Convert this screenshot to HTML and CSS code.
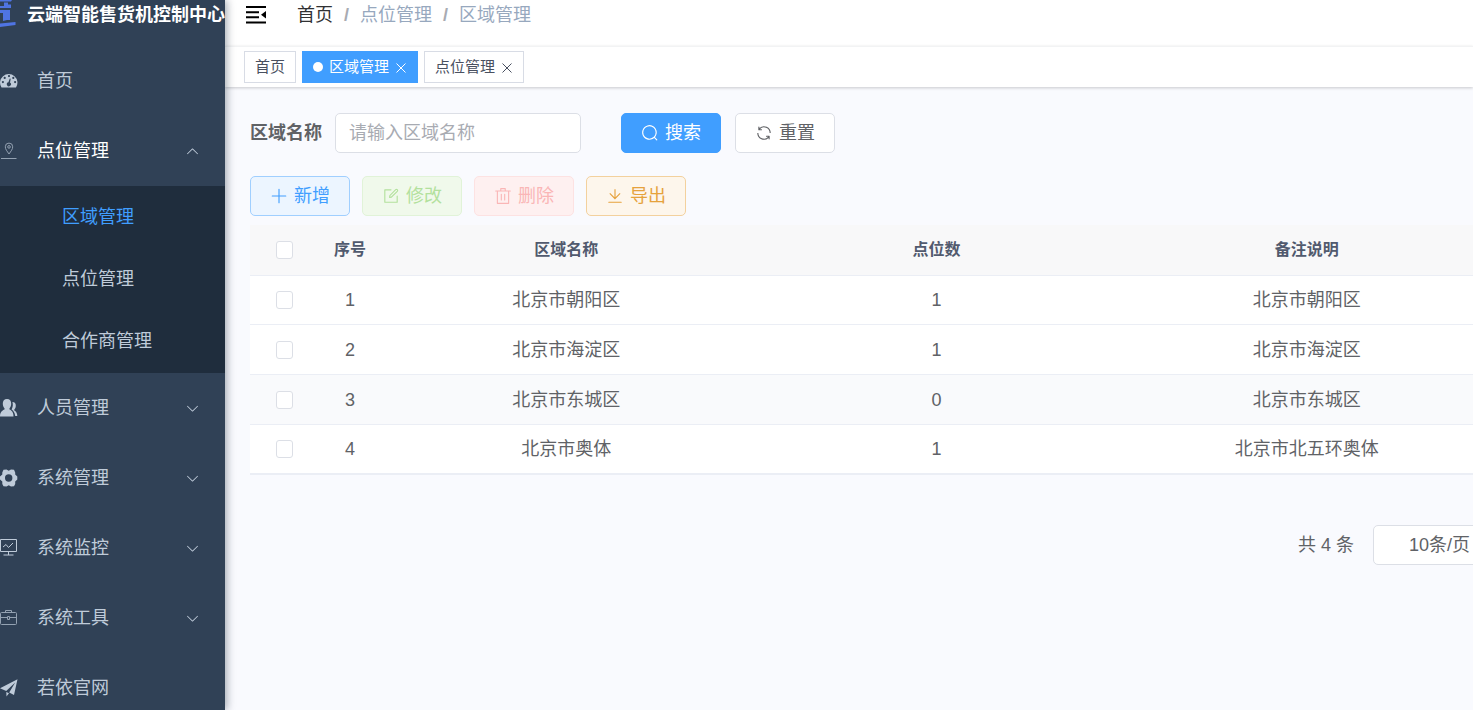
FILE: index.html
```html
<!DOCTYPE html>
<html lang="zh-CN">
<head>
<meta charset="utf-8">
<title>云端智能售货机控制中心</title>
<link rel="stylesheet" href="styles.css">
</head>
<body>
<svg class="sprite" aria-hidden="true">
  <symbol id="arrow" viewBox="0 0 1024 1024"><path d="M831.872 340.864 512 652.672 192.128 340.864a30.592 30.592 0 0 0-42.752 0 29.12 29.12 0 0 0 0 41.6L489.664 714.24a32 32 0 0 0 44.672 0l340.288-331.712a29.12 29.12 0 0 0 0-41.728 30.592 30.592 0 0 0-42.752 0z"/></symbol>
  <symbol id="close" viewBox="0 0 12 12"><path d="M1.500 1.500 10.500 10.500M10.500 1.500 1.500 10.500" fill="none" stroke="currentColor"/></symbol>
</svg>
<div class="app">
  <aside class="sidebar">
    <div class="brand">
      <svg class="brand-logo" viewBox="0 0 18 28"><path d="M0 0H12L11 1.500H0zM4 2.500H8V4.500H11V8H0V6H4zM0 10H10V20H7L3 21V13H0zM0 23.500 15.500 22V25L0 27z" fill="#4f74e3"/></svg>
      <h1 class="brand-title">云端智能售货机控制中心</h1>
    </div>
    <nav class="menu">
      <a class="menu-item" href="#">
        <svg class="menu-icon" viewBox="0 0 18 18"><path fill-rule="evenodd" d="M1.500 15.500A8.700 8.700 0 1 1 16 15.500zM9 3a1.100 1.100 0 1 0 0 2.200 1.100 1.100 0 0 0 0-2.200M4.700 4.800a1.100 1.100 0 1 0 0 2.200 1.100 1.100 0 0 0 0-2.200M13.300 4.800a1.100 1.100 0 1 0 0 2.200 1.100 1.100 0 0 0 0-2.200M2.900 9a1.100 1.100 0 1 0 0 2.200 1.100 1.100 0 0 0 0-2.200M15.100 9a1.100 1.100 0 1 0 0 2.200 1.100 1.100 0 0 0 0-2.200M9.800 6.500 8.400 10.300A2 2 0 1 0 10 10.600L10.700 6.800z"/></svg>
        <span>首页</span>
      </a>
      <a class="menu-item opened" href="#">
        <svg class="menu-icon line dim" viewBox="0 0 18 18"><path d="M9 12C7 9 5.300 7.300 5.300 4.800a3.700 3.700 0 0 1 7.400 0C12.700 7.300 11 9 9 12z"/><circle cx="9" cy="4.900" r="1.300"/><path d="M1 16.500H16.500"/></svg>
        <span>点位管理</span>
        <svg class="menu-arrow up"><use href="#arrow"/></svg>
      </a>
      <div class="submenu">
        <a class="submenu-item active" href="#">区域管理</a>
        <a class="submenu-item" href="#">点位管理</a>
        <a class="submenu-item" href="#">合作商管理</a>
      </div>
      <a class="menu-item" href="#">
        <svg class="menu-icon" viewBox="0 0 18 18"><path d="M7 0C9.700 0 11.400 1.900 11.200 5 11.100 7 10.400 8.300 9.500 9.300V10.600C11.500 11.500 13.500 13 13.500 17.500H0C0 13 2.500 11.500 4.500 10.600V9.300C3.600 8.300 2.900 7 2.800 5 2.600 1.900 4.300 0 7 0zM12.400 3C14.800 3 15.900 4.700 15.800 6.700 15.700 8.500 15.200 9.700 14.300 10.500V11.500C16 12.500 17.300 14 17.300 17H15.200C14.900 13.500 13.300 11.500 11.600 10.400 12.900 8 13.200 5.500 12.400 3z"/></svg>
        <span>人员管理</span>
        <svg class="menu-arrow"><use href="#arrow"/></svg>
      </a>
      <a class="menu-item" href="#">
        <svg class="menu-icon" viewBox="0 0 18 18"><path fill-rule="evenodd" d="M3.500.800 6.500.500 8.700 1.700 11 .500 14 .800 15.200 3.500 15.200 5.500 17.300 7.500V10.500L15.200 12.500V15L14 17.300 11 17.500 8.700 16.300 6.500 17.500 3.500 17.300 2.300 15V12.500L0 10.500V7.500L2.300 5.500V3.500zM8.700 5.300a3.700 3.700 0 1 0 0 7.400 3.700 3.700 0 0 0 0-7.400"/></svg>
        <span>系统管理</span>
        <svg class="menu-arrow"><use href="#arrow"/></svg>
      </a>
      <a class="menu-item" href="#">
        <svg class="menu-icon line" viewBox="0 0 18 18"><path d="M.500.500H16.500V12.500H.500zM8.500 12.500V16M3.500 16H13.500M3 8 6 5.500 8.500 8.500 13 4"/></svg>
        <span>系统监控</span>
        <svg class="menu-arrow"><use href="#arrow"/></svg>
      </a>
      <a class="menu-item" href="#">
        <svg class="menu-icon line dim" viewBox="0 0 18 18"><path d="M1.500 3.500H15.500Q16.500 3.500 16.500 4.500V14.500Q16.500 15.500 15.500 15.500H1.500Q.500 15.500.500 14.500V4.500Q.500 3.500 1.500 3.500zM5.500 3.500V1.500H11.500V3.500M.500 8.500H7M10 8.500H16.500M7.500 7.500H9.500V10.500H7.500z"/></svg>
        <span>系统工具</span>
        <svg class="menu-arrow"><use href="#arrow"/></svg>
      </a>
      <a class="menu-item" href="#">
        <svg class="menu-icon" viewBox="0 0 18 18"><path d="M17.500.300 14 16 9.200 13.500 15.200 3.500 6.200 12 0 9.300zM6.300 13 9 14.300 6.500 17.500z"/></svg>
        <span>若依官网</span>
      </a>
    </nav>
  </aside>
  <main class="main">
    <header class="navbar">
      <button class="fold" aria-label="收起菜单">
        <svg viewBox="0 0 20 18"><path d="M0 0H20V2H0zM0 5.300H13V7.300H0zM0 10.300H13V12.300H0zM0 15.600H20V17.600H0zM20 5V12.500L15 8.800z"/></svg>
      </button>
      <nav class="breadcrumb">
        <a class="crumb-link" href="#">首页</a><span class="slash">/</span><span>点位管理</span><span class="slash">/</span><span>区域管理</span>
      </nav>
    </header>
    <nav class="tags">
      <a class="tag" href="#">首页</a>
      <a class="tag current" href="#"><i class="dot"></i>区域管理<svg class="tag-close"><use href="#close"/></svg></a>
      <a class="tag" href="#">点位管理<svg class="tag-close"><use href="#close"/></svg></a>
    </nav>
    <section class="content">
      <form class="search">
        <label class="search-label" for="region">区域名称</label>
        <input class="search-input" id="region" type="text" placeholder="请输入区域名称">
        <button class="btn primary" type="button"><svg viewBox="0 0 1024 1024"><path d="m795.904 750.720 124.992 124.928a32 32 0 0 1-45.248 45.248L750.656 795.904a416 416 0 1 1 45.248-45.248zM480 832a352 352 0 1 0 0-704 352 352 0 0 0 0 704z"/></svg>搜索</button>
        <button class="btn" type="button"><svg viewBox="0 0 1024 1024"><path d="M771.776 794.880A384 384 0 0 1 128 512h64a320 320 0 0 0 555.712 216.448H654.720a32 32 0 1 1 0-64h149.056a32 32 0 0 1 32 32v148.928a32 32 0 1 1-64 0v-50.560zM276.288 295.616h92.992a32 32 0 0 1 0 64H220.160a32 32 0 0 1-32-32V178.560a32 32 0 0 1 64 0v50.560A384 384 0 0 1 896.128 512h-64a320 320 0 0 0-555.776-216.384z"/></svg>重置</button>
      </form>
      <div class="toolbar">
        <button class="btn add" type="button"><svg viewBox="0 0 1024 1024"><path d="M480 480V128a32 32 0 0 1 64 0v352h352a32 32 0 1 1 0 64H544v352a32 32 0 1 1-64 0V544H128a32 32 0 0 1 0-64z"/></svg>新增</button>
        <button class="btn edit" type="button" disabled><svg viewBox="0 0 1024 1024"><path d="M832 512a32 32 0 1 1 64 0v352a32 32 0 0 1-32 32H160a32 32 0 0 1-32-32V160a32 32 0 0 1 32-32h352a32 32 0 0 1 0 64H192v640h640z"/><path d="m469.952 554.240 52.800-7.552L847.104 222.400a32 32 0 1 0-45.248-45.248L477.440 501.440l-7.552 52.800zm422.400-422.400a96 96 0 0 1 0 135.808l-331.840 331.840a32 32 0 0 1-18.112 9.088L436.800 623.680a32 32 0 0 1-36.224-36.224l15.104-105.600a32 32 0 0 1 9.024-18.112l331.904-331.840a96 96 0 0 1 135.744 0z"/></svg>修改</button>
        <button class="btn remove" type="button" disabled><svg viewBox="0 0 1024 1024"><path d="M160 256H96a32 32 0 0 1 0-64h256V95.936a32 32 0 0 1 32-32h256a32 32 0 0 1 32 32V192h256a32 32 0 1 1 0 64h-64v672a32 32 0 0 1-32 32H192a32 32 0 0 1-32-32zm448-64v-64H416v64zM224 896h576V256H224zm192-128a32 32 0 0 1-32-32V416a32 32 0 0 1 64 0v320a32 32 0 0 1-32 32m192 0a32 32 0 0 1-32-32V416a32 32 0 0 1 64 0v320a32 32 0 0 1-32 32"/></svg>删除</button>
        <button class="btn export" type="button"><svg viewBox="0 0 1024 1024"><path d="M160 832h704a32 32 0 1 1 0 64H160a32 32 0 1 1 0-64m384-253.696 236.288-236.352 45.248 45.248L508.800 704 192 387.200l45.248-45.248L480 584.704V128h64z"/></svg>导出</button>
      </div>
      <div class="table-wrap">
        <table class="table">
          <thead>
            <tr><th class="col-check"><input type="checkbox" aria-label="全选"></th><th class="col-index">序号</th><th>区域名称</th><th>点位数</th><th>备注说明</th></tr>
          </thead>
          <tbody>
            <tr><td><input type="checkbox" aria-label="选择 1"></td><td>1</td><td>北京市朝阳区</td><td>1</td><td>北京市朝阳区</td></tr>
            <tr><td><input type="checkbox" aria-label="选择 2"></td><td>2</td><td>北京市海淀区</td><td>1</td><td>北京市海淀区</td></tr>
            <tr class="hovered"><td><input type="checkbox" aria-label="选择 3"></td><td>3</td><td>北京市东城区</td><td>0</td><td>北京市东城区</td></tr>
            <tr><td><input type="checkbox" aria-label="选择 4"></td><td>4</td><td>北京市奥体</td><td>1</td><td>北京市北五环奥体</td></tr>
          </tbody>
        </table>
      </div>
      <div class="pagination">
        <span>共 4 条</span>
        <select class="page-size" aria-label="每页条数"><option>10条/页</option></select>
      </div>
    </section>
  </main>
</div>
</body>
</html>
```
FILE: styles.css
```css
* { box-sizing: border-box; }
body {
  margin: 0;
  overflow: hidden;
  font-family: "Liberation Sans", "Noto Sans CJK SC", sans-serif;
  font-size: 18px;
  line-height: 24px;
  color: #606266;
}
a { color: inherit; text-decoration: none; }
button, input, select { font: inherit; color: inherit; }
svg { fill: currentColor; flex: none; }
.sprite { display: none; }

.app { display: flex; height: 100vh; overflow: hidden; }

.sidebar {
  position: relative;
  z-index: 1;
  flex: none;
  width: 225px;
  background: #304156;
  box-shadow: 2px 0 8px rgba(0, 21, 41, .35);
  color: #bfcbd9;
  overflow-y: clip;
}
.brand { display: flex; height: 46px; padding-bottom: 16px; align-items: center; gap: 9px; }
.brand-logo { width: 18px; height: 28px; align-self: flex-start; }
.brand-title { margin: 0; font-size: 18px; line-height: 28px; color: #fff; white-space: nowrap; }
.menu-item { display: flex; align-items: center; height: 70px; padding-right: 25px; }
.menu-item.opened { color: #fff; }
.menu-icon { width: 18px; height: 18px; margin-right: 19px; color: #bfcbd9; }
.menu-icon.line { fill: none; stroke: currentColor; }
.dim { opacity: .7; }
.menu-arrow { width: 15px; height: 15px; margin-left: auto; color: #bfcbd9; }
.up { transform: rotate(180deg); }
.submenu { padding-bottom: 1px; background: #1f2d3d; }
.submenu-item { display: flex; align-items: center; height: 62px; padding-left: 62px; }
.submenu-item.active { color: #409eff; }

.main { flex: 1; min-width: 0; overflow: hidden; background: #f9fafe; }
.navbar {
  display: flex;
  align-items: center;
  height: 46px;
  padding: 0 21px 16px;
  background: #fff;
}
.fold { width: 20px; height: 24px; padding: 0; border: 0; background: none; color: #000; }
.fold svg { display: block; width: 20px; height: 18px; }
.breadcrumb { display: flex; margin-left: 31px; color: #97a8be; }
.crumb-link { color: #303133; }
.slash { margin: 0 11px; font-weight: 700; color: #a8abb2; }

.tags {
  display: flex;
  gap: 6px;
  height: 41px;
  padding: 4px 19px 0;
  border-top: 1px solid #f2f3f4;
  background: #fff;
  box-shadow: 0 1px 3px rgba(0, 0, 0, .2);
}
.tag {
  display: flex;
  align-items: center;
  height: 32px;
  padding: 0 10px;
  border: 1px solid #d8dce5;
  background: #fff;
  font-size: 15px;
  color: #495060;
}
.tag.current { border-color: #409eff; background: #409eff; color: #fff; }
.dot { width: 10px; height: 10px; margin-right: 6px; border-radius: 50%; background: #fff; }
.tag-close { width: 12px; height: 12px; margin-left: 6px; margin-top: 2px; }

.content { padding: 26px 0 0 25px; }
.search { display: flex; align-items: center; }
.search-label { margin-right: 13px; font-weight: 700; }
.search-input {
  width: 246px;
  height: 40px;
  margin-right: 40px;
  padding: 0 13px;
  border: 1px solid #dcdfe6;
  border-radius: 5px;
  background: #fff;
}
.search-input::placeholder { color: #a8abb2; }
.btn {
  display: flex;
  align-items: center;
  justify-content: center;
  gap: 6px;
  height: 40px;
  padding: 0 19px 1px;
  border: 1px solid #dcdfe6;
  border-radius: 5px;
  background: #fff;
}
.btn svg { width: 18px; height: 18px; }
.search .btn { margin-right: 14px; }
.btn.primary { border-color: #409eff; background: #409eff; color: #fff; }
.toolbar { display: flex; gap: 12px; margin-top: 23px; }
.add { border-color: #a0cfff; background: #ecf5ff; color: #409eff; }
.edit { border-color: #e1f3d8; background: #f0f9eb; color: #b3e19d; }
.remove { border-color: #fde2e2; background: #fef0f0; color: #fab6b6; }
.export { border-color: #f3d19e; background: #fdf6ec; color: #e6a23c; }

.table-wrap { margin: 9px -19px 0 0; border-bottom: 1px solid #ebeef5; }
.table { width: 100%; table-layout: fixed; border-collapse: separate; border-spacing: 0; background: #fff; text-align: center; }
.table th, .table td { height: 50px; padding: 0; border-bottom: 1px solid #ebeef5; }
.table th { height: 51px; background: #f8f8f9; font-size: 16px; color: #515a6e; }
.table tr:first-child td, .table tr:last-child td { height: 49px; }
.col-check { width: 69px; }
.col-index { width: 62px; }
.hovered { background: #f9fafc; }
.table input {
  display: block;
  appearance: none;
  width: 17px;
  height: 18px;
  margin: 0 auto;
  border: 1px solid #dcdfe6;
  border-radius: 3px;
  background: #fff;
}

.pagination { display: flex; justify-content: flex-end; align-items: center; gap: 19px; margin: 50px -60px 0 0; }
.page-size {
  appearance: none;
  width: 160px;
  height: 40px;
  padding: 0 35px;
  border: 1px solid #dcdfe6;
  border-radius: 5px;
  background: #fff;
}
```
